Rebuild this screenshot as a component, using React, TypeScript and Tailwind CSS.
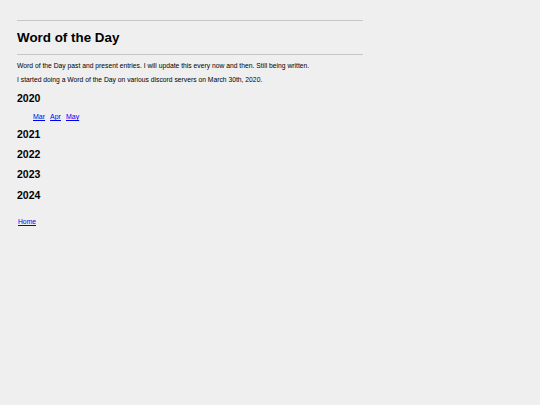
import React from "react";

const years = ["2020", "2021", "2022", "2023", "2024"];
const months2020 = ["Mar", "Apr", "May"];

export default function App() {
  return (
    <div
      className="min-h-screen bg-[#efefef] text-black pl-[17px] pt-[20px]"
      style={{ fontFamily: '"Liberation Sans", Arial, sans-serif' }}
    >
      <div className="w-[346px]">
        <hr className="border-0 border-t border-[#c6c6c6]" />
        <h1 className="text-[13.4px] leading-[16px] font-bold mt-[9px] mb-[8px]">Word of the Day</h1>
        <hr className="border-0 border-t border-[#c6c6c6]" />
        <p className="text-[6.75px] leading-[8px] mt-[7px]">
          Word of the Day past and present entries. I will update this every now and then. Still being written.
        </p>
        <p className="text-[6.75px] leading-[8px] mt-[6px]">
          I started doing a Word of the Day on various discord servers on March 30th, 2020.
        </p>
      </div>
      <div className="mt-[8px] flex flex-col">
        {years.map((y, i) => (
          <div key={y} className={i === 0 ? "mb-[7px]" : i === 3 ? "mb-[9px]" : "mb-[8px]"}>
            <h2 className="text-[10.5px] leading-[12px] font-bold">{y}</h2>
            {y === "2020" && (
              <div className="flex gap-[5px] pl-[16px] mt-[9px] text-[7px] leading-[8px]">
                {months2020.map((m) => (
                  <a key={m} href="#" className="text-[#0000ee] underline">
                    {m}
                  </a>
                ))}
              </div>
            )}
          </div>
        ))}
      </div>
      <div className="mt-[9px] pl-[1px] text-[6.75px] leading-[8px]">
        <a href="#" className="text-[#0000ee] underline">
          Home
        </a>
      </div>
    </div>
  );
}
